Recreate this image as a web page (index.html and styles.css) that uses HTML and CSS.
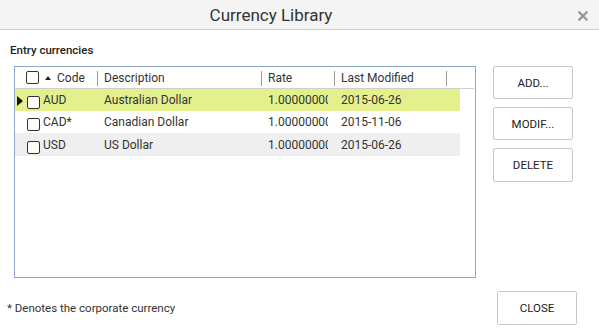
FILE: index.html
```html
<!DOCTYPE html>
<html>
<head>
<meta charset="utf-8">
<link rel="stylesheet" href="styles.css">
</head>
<body>
<div class="dialog">
  <div class="header">
    <div class="title">Currency Library</div>
    <div class="close-x">
      <svg width="10" height="10" viewBox="0 0 10 10"><path d="M1.5 1.5 L8.5 8.5 M8.5 1.5 L1.5 8.5" stroke="#999" stroke-width="2.4" stroke-linecap="square"/></svg>
    </div>
  </div>
  <div class="body">
    <div class="left">
      <div class="label">Entry currencies</div>
      <div class="grid">
        <div class="ghead">
          <div class="hc c1"><span class="cb"></span><span class="sort"></span><span>Code</span></div>
          <div class="hc c2">Description</div>
          <div class="hc c3">Rate</div>
          <div class="hc c4">Last Modified</div>
        </div>
        <div class="row sel">
          <div class="cell c1"><span class="ptr"></span><span class="cb rb"></span><span>AUD</span></div>
          <div class="cell c2">Australian Dollar</div>
          <div class="cell c3"><span class="clip">1.000000000</span></div>
          <div class="cell c4">2015-06-26</div>
        </div>
        <div class="row">
          <div class="cell c1"><span class="ptr off"></span><span class="cb rb"></span><span>CAD*</span></div>
          <div class="cell c2">Canadian Dollar</div>
          <div class="cell c3"><span class="clip">1.000000000</span></div>
          <div class="cell c4">2015-11-06</div>
        </div>
        <div class="row alt">
          <div class="cell c1"><span class="ptr off"></span><span class="cb rb"></span><span>USD</span></div>
          <div class="cell c2">US Dollar</div>
          <div class="cell c3"><span class="clip">1.000000000</span></div>
          <div class="cell c4">2015-06-26</div>
        </div>
      </div>
    </div>
    <div class="buttons">
      <button class="btn">ADD...</button>
      <button class="btn">MODIF...</button>
      <button class="btn">DELETE</button>
    </div>
  </div>
  <div class="footer">
    <div class="note">* Denotes the corporate currency</div>
    <button class="btn close">CLOSE</button>
  </div>
</div>
</body>
</html>
```
FILE: styles.css
```css
* { box-sizing: border-box; }
html, body { margin: 0; padding: 0; background: #fff; }
body { font-family: Roboto, "Liberation Sans", sans-serif; color: #333; font-size: 12px; }
.dialog { width: 599px; height: 330px; display: flex; flex-direction: column; }
.header { height: 30px; background: #f4f4f4; border-bottom: 1px solid #cfcfcf; display: flex; align-items: center; }
.title { flex: 1; text-align: center; font-size: 17px; color: #333; padding-left: 2px; }
.close-x { width: 59px; display: flex; justify-content: center; padding-left: 27px; padding-top: 2px; }
.body { display: flex; padding-left: 10px; }
.left { display: flex; flex-direction: column; }
.label { font-size: 11.5px; font-weight: 500; color: #222; margin-top: 13px; height: 23px; }
.grid { margin-left: 4px; width: 462px; height: 212px; border: 1px solid #8fa9cc; }
.ghead { display: grid; grid-template-columns: 83px 164px 73px 112px; height: 22px; border-bottom: 1px solid #cfcfcf; width: 459px; }
.hc { display: flex; align-items: center; padding-left: 6px; background: linear-gradient(#9a9a9a, #9a9a9a) right 4px / 1px 15px no-repeat; }
.hc.c1 { padding-left: 11px; }
.row { display: grid; grid-template-columns: 83px 164px 73px 112px; width: 445px; height: 22px; }
.row.sel { background: #e3f08c; }
.row.alt { background: #efefef; height: 23px; }
.cell { display: flex; align-items: center; padding-left: 6px; white-space: nowrap; overflow: hidden; }
.cell.c1 { padding-left: 1px; }
.clip { display: block; width: 60px; overflow: hidden; white-space: nowrap; }
.cb { width: 13px; height: 13px; border: 1px solid #333; border-radius: 2px; background: #fff; display: inline-block; flex: none; }
.rb { margin-top: 5px; margin-right: 3px; background: #fdfdf5; }
.sort { width: 0; height: 0; border-left: 3.5px solid transparent; border-right: 3.5px solid transparent; border-bottom: 4px solid #222; margin: 0 6px 0 6px; }
.ptr { width: 0; height: 0; border-top: 5.5px solid transparent; border-bottom: 5.5px solid transparent; border-left: 6px solid #111; margin-right: 4px; margin-left: 1px; margin-top: 2px; }
.ptr.off { border-left-color: transparent; }
.buttons { display: flex; flex-direction: column; gap: 8px; margin-left: 17px; padding-top: 36px; }
.btn { width: 80px; height: 33px; background: #fff; border: 1px solid #c8c8c8; border-radius: 2px; font-family: Roboto, "Liberation Sans", sans-serif; font-size: 11.5px; color: #222; padding: 0; }
.buttons .btn:nth-child(3) { height: 34px; }
.footer { display: flex; justify-content: space-between; align-items: center; padding: 13px 22px 0 7px; }
.note { font-size: 11.5px; color: #333; }
.btn.close { width: 80px; height: 34px; }
```
